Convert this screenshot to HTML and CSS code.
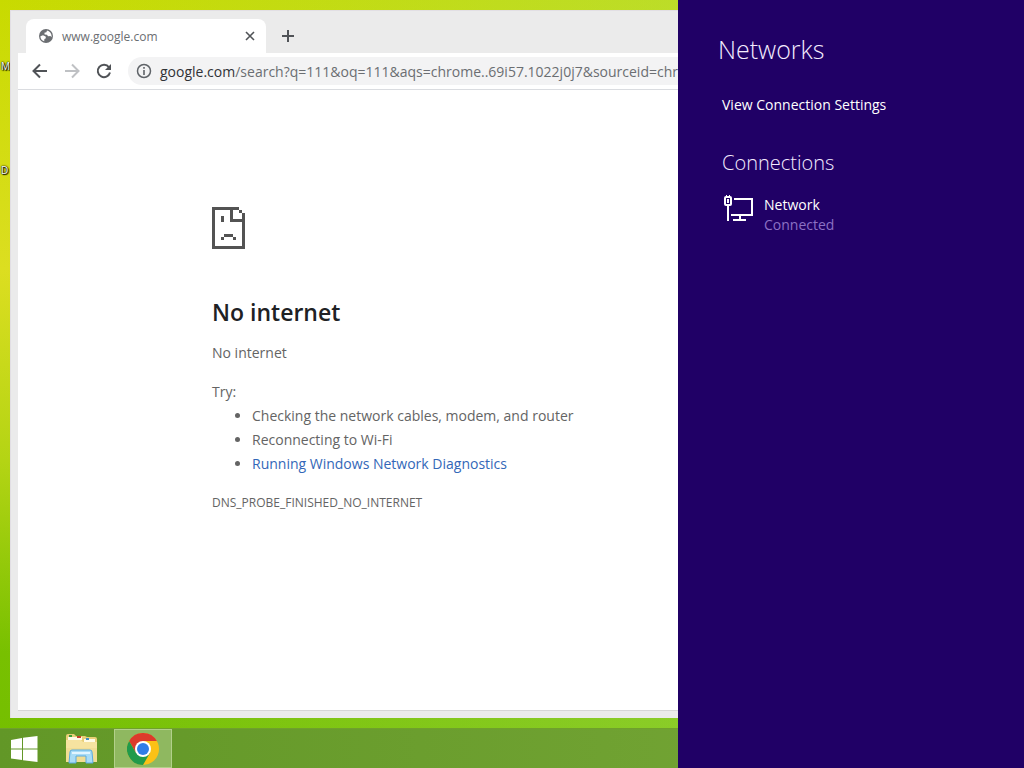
FILE: index.html
```html
<!DOCTYPE html>
<html lang="en">
<head>
    <meta charset="utf-8">
    <title>www.google.com</title>
    <link rel="stylesheet" href="styles.css">
</head>

<body>
    <main class="desktop">
        <div class="shortcuts">
            <span>M</span>
            <span>D</span>
        </div>
        <section class="window">
            <div class="tabstrip">
                <div class="tab">
                    <svg width="16" height="16" viewBox="0 0 16 16">
                        <circle cx="8" cy="8" r="7" fill="#6b6e72"/>
                        <path d="M2.4 8.2 5 7.2l2.6 1.3.3 1.8-1.5.8-.2 2.2C3.8 12.6 2.4 10.6 2.4 8.2zM9 2.5l-.6 1.7-2 .6.2 1.7 2.4.2 1 1.6 2.4-.3 1.1 1.3.1-1.3C13.6 5.4 11.7 3.1 9 2.5z" fill="#fff"/>
                    </svg>
                    <span class="tab-title">www.google.com</span>
                    <button class="tab-close" aria-label="Close tab">
                        <svg width="10" height="10" viewBox="0 0 10 10"><path d="M1 1l8 8M9 1 1 9" stroke="#505357" stroke-width="1.6"/></svg>
                    </button>
                </div>
                <button class="new-tab" aria-label="New tab">
                    <svg width="14" height="14" viewBox="0 0 14 14"><path d="M7 1v12M1 7h12" stroke="#505357" stroke-width="2"/></svg>
                </button>
            </div>
            <div class="toolbar">
                <button class="nav" aria-label="Back">
                    <svg width="16" height="16" viewBox="0 0 16 16"><path d="M15 8H2M8 1.5 1.5 8 8 14.5" fill="none" stroke="#505357" stroke-width="2"/></svg>
                </button>
                <button class="nav" aria-label="Forward" disabled>
                    <svg width="16" height="16" viewBox="0 0 16 16"><path d="M1 8h13M8 1.5 14.5 8 8 14.5" fill="none" stroke="#bfc1c4" stroke-width="2"/></svg>
                </button>
                <button class="nav" aria-label="Reload">
                    <svg width="16" height="16" viewBox="0 0 16 16"><path d="M13 4.3A6.2 6.2 0 1 0 14 9.6" fill="none" stroke="#505357" stroke-width="2"/><path d="M15 1v6H9z" fill="#505357"/></svg>
                </button>
                <div class="omnibox">
                    <svg width="16" height="16" viewBox="0 0 16 16"><circle cx="8" cy="8" r="6.5" fill="none" stroke="#5f6368" stroke-width="1.5"/><path d="M8 7v5M8 4v1.8" stroke="#5f6368" stroke-width="1.6"/></svg>
                    <label for="url">google.com</label>
                    <input id="url" type="text" value="/search?q=111&amp;oq=111&amp;aqs=chrome..69i57.1022j0j7&amp;sourceid=chrome&amp;ie=UTF-8">
                </div>
            </div>
            <article class="page">
                <svg class="sad" width="34" height="42" viewBox="0 0 34 42" shape-rendering="crispEdges">
                    <path d="M0 0h27v3H21v9h9V9h3v33H0zM3 3v36h27V15H18V3z" fill="#535353" fill-rule="evenodd"/>
                    <path d="M27 3h3v3h-3zM30 6h3v3h-3zM9 9h3v6H9zM12 27h9v3h-9zM9 30h3v3H9zM21 30h3v3h-3z" fill="#535353"/>
                </svg>
                <h1>No internet</h1>
                <p class="summary">No internet</p>
                <p class="try">Try:</p>
                <ul>
                    <li>Checking the network cables, modem, and router</li>
                    <li>Reconnecting to Wi-Fi</li>
                    <li><a href="#">Running Windows Network Diagnostics</a></li>
                </ul>
                <p class="code">DNS_PROBE_FINISHED_NO_INTERNET</p>
            </article>
        </section>
    </main>

    <nav class="taskbar">
        <button aria-label="Start">
            <svg width="28" height="26" viewBox="0 0 28 26"><path d="M1 4l11-2v10.5H1zM13 1.8 27.5 0v12.5H13zM1 13.5h11V24L1 22.4zM13 13.5h14.5V26L13 24.2z" fill="#fff"/></svg>
        </button>
        <button aria-label="File Explorer">
            <svg width="34" height="32" viewBox="0 0 34 32">
                <path d="M2 3q0-2 2-2h6l2 2h9l2 1h8q2 0 2 2v22H2z" fill="#e9cf78"/>
                <path d="M4 4h14v3H4zM20 6h11v3H20z" fill="#fffbe6"/>
                <path d="M5 3h3" stroke="#3b9c3b" stroke-width="2"/>
                <path d="M13 4h4" stroke="#c6402c" stroke-width="2"/>
                <path d="M22 6h3" stroke="#3d8cc4" stroke-width="2"/>
                <path d="M2 7h15l2 2h14v20H2z" fill="#f6e3a0"/>
                <path d="M2 15h31v14H2z" fill="#efd98c" opacity=".6"/>
                <path d="M5 30l1-11q0-2 2-2h18q2 0 2 2l1 11h-7v-7H12v7z" fill="#a9dcf6" stroke="#5aaade"/>
                <path d="M8 20h18" stroke="#e2f5ff" stroke-width="2"/>
            </svg>
        </button>
        <button class="active" aria-label="Google Chrome">
            <svg width="32" height="32" viewBox="0 0 32 32">
                <circle cx="16" cy="16" r="16" fill="#fbc116"/>
                <path d="M2.14 8A16 16 0 0 1 29.86 8H16L9.07 20z" fill="#dc3a2c"/>
                <path d="M2.14 8A16 16 0 0 0 16 32l6.93-12H9.07z" fill="#219a4b"/>
                <circle cx="16" cy="16" r="8" fill="#fff"/>
                <circle cx="16" cy="16" r="6" fill="#2f7de8"/>
            </svg>
        </button>
    </nav>

    <aside class="networks">
        <h2>Networks</h2>
        <a href="#">View Connection Settings</a>
        <h3>Connections</h3>
        <button class="connection">
            <svg width="30" height="28" viewBox="0 0 30 28" fill="none" stroke="#fff" stroke-width="2">
                <rect x="1" y="2" width="6" height="8" rx="1"/>
                <path d="M2 1h1M5 1h1M4 4v4M4 10v16M10 4h18v16H7M16 20v5M9 25h13"/>
            </svg>
            <span>
                <span class="name">Network</span>
                <span class="state">Connected</span>
            </span>
        </button>
    </aside>
</body>
</html>
```

FILE: styles.css
```css
* {
    box-sizing: border-box;
}
body {
    margin: 0;
    min-height: 100vh;
    display: flex;
    flex-direction: column;
    position: relative;
    overflow: hidden;
    font-family: "Open Sans", "Noto Sans", sans-serif;
    font-size: 14px;
    background: linear-gradient(to right, rgba(170, 225, 100, 0), rgba(170, 225, 100, 0.6)), linear-gradient(#c8da00, #dcde20 35%, #b4d414 60%, #78c000 85%, #74be00);
}
h1, h2, h3, p, ul {
    margin: 0;
}
button {
    display: flex;
    align-items: center;
    justify-content: center;
    padding: 0;
    border: 0;
    background: none;
    font: inherit;
    color: inherit;
}

.desktop {
    flex: 1;
    display: flex;
    padding: 10px 0;
}
.shortcuts {
    width: 10px;
    padding: 48px 0 0 1px;
    display: flex;
    flex-direction: column;
    gap: 88px;
    font-size: 10px;
    line-height: 16px;
    color: #fff;
    text-shadow: 0 0 1px #000, 0 0 2px #000, 1px 1px 1px #000;
}

.window {
    flex: 1;
    min-width: 0;
    display: flex;
    flex-direction: column;
    padding: 0 0 7px 7px;
    background: #ebebeb;
    border: solid #e2dfe4;
    border-width: 1px 0 0 1px;
}
.tabstrip {
    display: flex;
    padding: 8px 0 0 8px;
}
.tab {
    width: 240px;
    height: 34px;
    display: flex;
    align-items: center;
    gap: 8px;
    padding: 0 10px 0 12px;
    background: #fff;
    border-radius: 8px 8px 0 0;
}
.tab-title {
    flex: 1;
    font-size: 12px;
    color: #6b6e72;
}
.tab-close {
    width: 12px;
}
.new-tab {
    width: 28px;
    height: 34px;
    margin-left: 8px;
}
.toolbar {
    display: flex;
    align-items: center;
    height: 37px;
    padding-left: 6px;
    background: #fff;
    border-bottom: 1px solid #dadce0;
}
.nav {
    width: 32px;
    height: 32px;
}
.omnibox {
    flex: 1;
    height: 28px;
    display: flex;
    align-items: center;
    margin-left: 8px;
    padding-left: 8px;
    background: #f3f3f4;
    border-radius: 14px 0 0 14px;
    color: #303236;
}
.omnibox label {
    margin-left: 8px;
}
.omnibox input {
    flex: 1;
    padding: 0;
    border: 0;
    outline: 0;
    background: none;
    font: inherit;
    color: #6b6e72;
}

.page {
    flex: 1;
    padding: 117px 0 0 194px;
    background: #fff;
    border-bottom: 1px solid #d6d6d6;
    color: #646464;
    line-height: 24px;
}
.sad {
    display: block;
}
h1 {
    margin-top: 48px;
    font-size: 23px;
    font-weight: 600;
    line-height: 30px;
    color: #202124;
}
.summary {
    margin-top: 14px;
}
.try {
    margin-top: 15px;
}
.page ul {
    padding-left: 40px;
}
.page a {
    color: #3367b8;
    text-decoration: none;
}
.code {
    margin-top: 15px;
    font-size: 12px;
}

.taskbar {
    display: flex;
    height: 40px;
    background: linear-gradient(to right, #629727, #78a838);
    border-top: 1px solid #6fa02c;
}
.taskbar button {
    width: 48px;
}
.taskbar button + button {
    width: 58px;
    margin-left: 4px;
}
.taskbar .active {
    background: #8fb860;
    border: 1px solid #b2d08a;
}

.networks {
    position: absolute;
    top: 0;
    right: 0;
    bottom: 0;
    width: 346px;
    padding: 29px 40px;
    background: #200066;
    color: #f4ecff;
}
.networks h2 {
    font-size: 25px;
    font-weight: 300;
    line-height: 40px;
}
.networks a {
    display: block;
    margin: 26px 0 0 4px;
    line-height: 20px;
    color: #fff;
    text-decoration: none;
}
.networks h3 {
    margin: 34px 0 0 4px;
    font-size: 20px;
    font-weight: 300;
    line-height: 28px;
}
.connection {
    align-items: flex-start;
    gap: 10px;
    margin: 18px 0 0 6px;
    text-align: left;
    line-height: 20px;
}
.connection .name, .connection .state {
    display: block;
}
.name {
    color: #fff;
}
.state {
    color: #8c70c4;
}
```
